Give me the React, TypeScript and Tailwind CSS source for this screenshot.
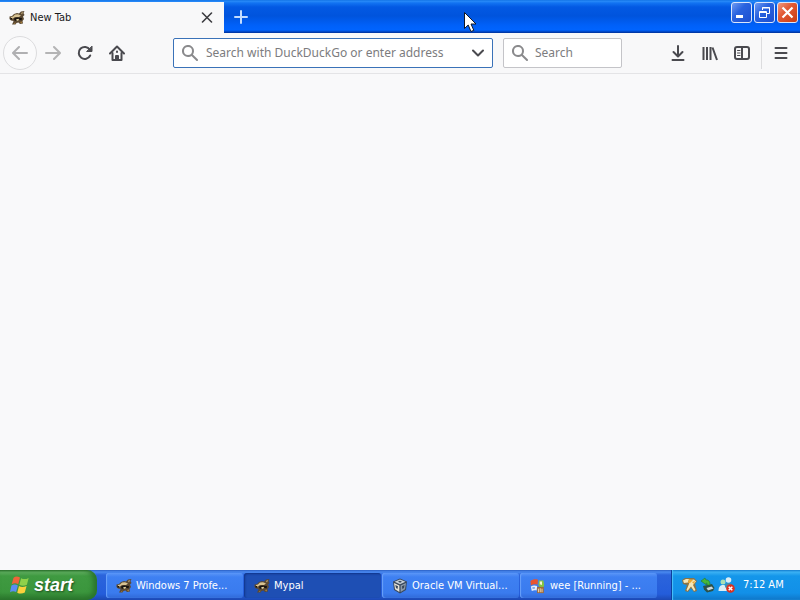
import type { ReactNode } from 'react';
import { clsx } from 'clsx';

type IconProps = { className?: string };

function PolecatIcon({ className = 'w-4 h-4' }: IconProps) {
  return (
    <svg viewBox="0 0 16 16" className={className} aria-hidden="true">
      <path d="M0.500 6.500 3 6 5 4 8 3 10 3.500 12 1.500 15.500 1 14.500 3 15.500 5 14 6.500 15 9 13.500 11 14 13.500 11 14 9.500 12.500 7.500 13 6.500 14.500 3 14.500 4 12.500 4.500 11 2 10.500 0.500 9z" fill="#5c4a33" />
      <path d="M2 7 4 6.500 6 4.500 9 4.200 12 5.500 10 7 6 7 4 8.500 2 8.500z" fill="#d8c393" />
      <path d="M12 3 14 2 13 4.500z" fill="#c9b17c" />
      <path d="M5 8.500 8 7.500 13 8 12.500 10.500 10 9.500 8 11 5.500 10.500z" fill="#16120e" />
      <path d="M7 9.500 9.500 8.700 10 10 8 11z" fill="#ead9a8" />
      <path d="M1.500 8H3V9.500H1.500z" fill="#16120e" />
      <path d="M11 12 13 11.500 12.500 13.500zM5 13.500 6.500 12.500 6 14z" fill="#b98a3d" />
    </svg>
  );
}

function WindowsFlag({ className = 'w-4 h-4' }: IconProps) {
  return (
    <svg viewBox="0 0 18 18" className={className} aria-hidden="true">
      <path d="M3.200 2.400C5.200 1 7 1.200 9 2.300L7.400 8.300C5.400 7.100 3.600 7.200 1.500 8.400z" fill="#f0643a" />
      <path d="M10 2.900C12.200 4 14.200 3.900 16.800 2.600L15.200 8.700C12.700 10 10.600 9.900 8.400 8.800z" fill="#8fd14a" />
      <path d="M1.300 9.500C3.300 8.300 5.200 8.400 7.100 9.500L5.500 15.400C3.600 14.300 1.900 14.300 0 15.500z" fill="#5b8df2" />
      <path d="M8.100 10C10.200 11.100 12.300 11.100 14.900 9.800L13.300 15.800C10.900 17.100 8.700 17 6.500 15.900z" fill="#fbd13c" />
    </svg>
  );
}

function VirtualBoxIcon({ className = 'w-4 h-4' }: IconProps) {
  return (
    <svg viewBox="0 0 16 16" className={className} aria-hidden="true">
      <path d="M8 0.500 15 3.500 14 12 8 15.500 2 12 1 3.500z" fill="#39485c" />
      <path d="M8 1.500 13.500 3.800 8 6.300 2.500 3.800z" fill="#c7d0d8" />
      <path d="M2 5 7.400 7.400V14L3 11.300z" fill="#e7e3d8" />
      <path d="M14 5 8.600 7.400V14L13 11.300z" fill="#8b99a8" />
      <path d="M3.300 7 6 8.300 5.500 11 4 10zM10 8.300 12.500 7 12 10 10.300 11zM6 3.500 8 2.700 10 3.700 8 4.700z" fill="#374659" />
    </svg>
  );
}

function RunningVmIcon({ className = 'w-4 h-4' }: IconProps) {
  return (
    <svg viewBox="0 0 18 16" className={className} aria-hidden="true">
      <path d="M0.500 2.500C3 0.500 6 0 9 1L8.500 6.500C5.500 5.500 3 6 1 7.500z" fill="#e8552e" />
      <path d="M10 1.500C12 2 13 2 15 1.500L16 7 14 12 9.500 7.500z" fill="#86c440" />
      <path d="M1 8.500C3.500 7 5.500 7 8 8L7.500 13C5.500 12.500 4 12.500 2 13.500z" fill="#e9eef5" />
      <path d="M2.500 9.500 5.500 9 5.500 11 3 11.500z" fill="#7ba3e6" />
      <path d="M11 3 13.500 3 13.500 7 11 6z" fill="#f3f3d8" />
      <path d="M8 9H15.500V16H8z" fill="#a06a35" />
      <path d="M9.500 11V15M11.500 10.500V15M13.500 11V15" stroke="#f6e3c0" />
    </svg>
  );
}

function SearchGlyph() {
  return (
    <svg viewBox="0 0 16 16" className="w-4 h-4 shrink-0 fill-[#8a8a8c]" aria-hidden="true">
      <path d="M15.707 14.293l-4.822-4.822a6.019 6.019 0 1 0-1.414 1.414l4.822 4.822a1 1 0 0 0 1.414-1.414zM6 10a4 4 0 1 1 4-4 4 4 0 0 1-4 4z" />
    </svg>
  );
}

function ToolbarButton({ label, children, dim }: { label: string; children: ReactNode; dim?: boolean }) {
  return (
    <button
      type="button"
      aria-label={label}
      className={clsx('flex items-center justify-center w-8 h-8 shrink-0', dim ? 'text-[#b4b4b5]' : 'text-[#4a4a4f]')}
    >
      <svg viewBox="0 0 16 16" className="w-4 h-4" fill="none" stroke="currentColor" strokeWidth="2" strokeLinecap="round" strokeLinejoin="round">
        {children}
      </svg>
    </button>
  );
}

function TitleBar() {
  const caption =
    'flex items-center justify-center w-[21px] h-[21px] rounded-[3px] border border-[#dbe6fb]';
  return (
    <header className="flex h-[33px] bg-[linear-gradient(to_bottom,#0a6be0_0,#2a8cf8_1px,#1273f2_3px,#0359e3_7px,#0054dd_16px,#0060f8_25px,#0064ff_30px,#0040b8_32px,#003099_33px)]">
      <div className="flex w-56 mt-[2px] pl-[9px] pr-2 items-center bg-[#f8f8f9]">
        <PolecatIcon />
        <span className="ml-[5px] pt-px flex-1 text-[11px] text-[#18181a]">New Tab</span>
        <button type="button" aria-label="Close tab" className="flex items-center justify-center w-[18px] h-5">
          <svg viewBox="0 0 12 12" className="w-3 h-3" stroke="#3c3c40" strokeWidth="1.6" strokeLinecap="round">
            <path d="M1.500 1 10.500 10M10.500 1 1.500 10" />
          </svg>
        </button>
      </div>
      <button type="button" aria-label="New tab" className="flex items-center justify-center w-[34px]">
        <svg viewBox="0 0 14 14" className="w-3.5 h-3.5" stroke="#c3dcff" strokeWidth="2" strokeLinecap="round">
          <path d="M7 1V13M1 7H13" />
        </svg>
      </button>
      <div className="flex gap-[2px] ml-auto pt-[2px] pr-[2px]">
        <button type="button" aria-label="Minimize" className={clsx(caption, 'bg-[linear-gradient(135deg,#6f9bf3,#2a63df_40%,#1c4fd0)]')}>
          <svg viewBox="0 0 19 19" className="w-[19px] h-[19px]">
            <path d="M4 12H11V15H4z" fill="#fff" />
          </svg>
        </button>
        <button type="button" aria-label="Restore" className={clsx(caption, 'bg-[linear-gradient(135deg,#6f9bf3,#2a63df_40%,#1c4fd0)]')}>
          <svg viewBox="0 0 19 19" className="w-[19px] h-[19px]" fill="none" stroke="#fff">
            <path d="M7.500 7V4.500H14.500V10.500H12M7 5H15" />
            <path d="M4.500 8.500H11.500V14.500H4.500zM4 9.500H12" />
          </svg>
        </button>
        <button type="button" aria-label="Close" className={clsx(caption, 'bg-[linear-gradient(135deg,#f09a80,#e25a35_40%,#c93c14)]')}>
          <svg viewBox="0 0 19 19" className="w-[19px] h-[19px]" stroke="#fff" strokeWidth="2.2">
            <path d="M4.500 4.500 14.500 14.500M14.500 4.500 4.500 14.500" />
          </svg>
        </button>
      </div>
    </header>
  );
}

function NavBar() {
  return (
    <nav className="flex items-center h-[41px] px-[3px] bg-[#f8f8f9] border-b border-[#e4e4e6]">
      <button
        type="button"
        aria-label="Back"
        className="flex items-center justify-center w-[34px] h-[34px] shrink-0 rounded-full border border-[#dcdcde] bg-[#fafafb]"
      >
        <svg viewBox="0 0 16 16" className="w-4 h-4" fill="none" stroke="#b0b0b2" strokeWidth="2" strokeLinecap="round" strokeLinejoin="round">
          <path d="M15 8H1.500M7 2 1 8 7 14" />
        </svg>
      </button>
      <ToolbarButton label="Forward" dim>
        <path d="M1 8H14.500M9 2 15 8 9 14" />
      </ToolbarButton>
      <ToolbarButton label="Reload">
        <path d="M13.200 10.500A6 6 0 1 1 12.800 4.600" />
        <path d="M15 1.500V6.500H10z" fill="currentColor" strokeWidth="1" />
      </ToolbarButton>
      <ToolbarButton label="Home">
        <path d="M1 8.500 8 1.500 15 8.500" />
        <path d="M3.500 8V15H12.500V8" />
        <path d="M7 15V11H9V15" />
        <path d="M8 6.500V7" />
      </ToolbarButton>

      <label className="flex flex-1 items-center min-w-0 h-[30px] ml-10 px-2 bg-white border border-[#3a72b8] rounded-[2px]">
        <SearchGlyph />
        <input
          type="text"
          aria-label="Address"
          placeholder="Search with DuckDuckGo or enter address"
          className="flex-1 min-w-0 ml-2 font-['Noto_Sans',sans-serif] text-[12px] outline-none placeholder:text-[#7c7c7e]"
        />
        <svg viewBox="0 0 12 12" className="w-3 h-3 shrink-0" fill="none" stroke="#4a4a4f" strokeWidth="2" strokeLinecap="round" strokeLinejoin="round">
          <path d="M1 3.500 6 8.500 11 3.500" />
        </svg>
      </label>
      <label className="flex items-center w-[119px] h-[30px] ml-[10px] mr-10 px-2 bg-white border border-[#c4c4c8] rounded-[2px]">
        <SearchGlyph />
        <input
          type="text"
          aria-label="Search"
          placeholder="Search"
          className="flex-1 min-w-0 ml-[7px] font-['Noto_Sans',sans-serif] text-[12px] outline-none placeholder:text-[#7c7c7e]"
        />
      </label>

      <ToolbarButton label="Downloads">
        <path d="M8 1V11M3.500 7 8 11.500 12.500 7M2.500 15H13.500" />
      </ToolbarButton>
      <ToolbarButton label="Library">
        <path d="M1.500 2V15M5 2V15M8.500 2V15M10.500 2.500 15 15" strokeLinecap="butt" />
      </ToolbarButton>
      <ToolbarButton label="Sidebars">
        <rect x="1" y="2" width="14" height="12" rx="2" />
        <path d="M8 2V14" />
        <path d="M3.500 5.500H6M3.500 8H6M3.500 10.500H6" strokeWidth="1" />
      </ToolbarButton>
      <div className="w-px h-8 ml-[3px] mr-[3px] bg-[#dcdcde]" />
      <ToolbarButton label="Menu">
        <path d="M2.500 3H13.500M2.500 8H13.500M2.500 13H13.500" />
      </ToolbarButton>
    </nav>
  );
}

const tasks = [
  { title: 'Windows 7 Profe...', icon: PolecatIcon, active: false },
  { title: 'Mypal', icon: PolecatIcon, active: true },
  { title: 'Oracle VM Virtual...', icon: VirtualBoxIcon, active: false },
  { title: 'wee [Running] - ...', icon: RunningVmIcon, active: false },
];

function Taskbar() {
  return (
    <footer className="flex h-[30px] bg-[linear-gradient(to_bottom,#2a5fc4_0,#4a8af0_2px,#2b64dc_5px,#245ddb_24px,#1c48b4_30px)]">
      <button
        type="button"
        className="flex items-center w-[97px] h-[30px] shrink-0 pl-[10px] rounded-r-[10px] text-white bg-[linear-gradient(to_bottom,#2b6c2b_0,#62b162_2px,#3f9a41_6px,#3b963d_22px,#2a752c_30px)] shadow-[inset_-4px_0_5px_#2a742c]"
      >
        <WindowsFlag className="w-5 h-5" />
        <span className="ml-1 font-['Liberation_Sans',Arial,sans-serif] text-[18px] leading-5 font-bold italic [text-shadow:1px_1px_2px_#1d4d1e]">
          start
        </span>
      </button>
      <div className="flex flex-1 min-w-0 gap-px pl-[9px] pr-[14px] pt-[3px] pb-[2px]">
        {tasks.map(({ title, icon: Icon, active }) => (
          <button
            key={title}
            type="button"
            className={clsx(
              'flex items-center flex-1 min-w-0 pl-[10px] rounded-[3px] text-[11px] text-white whitespace-nowrap',
              active
                ? 'bg-[#1e4fb4] shadow-[inset_1px_1px_2px_#10348a]'
                : 'bg-[linear-gradient(to_bottom,#5a96f8_0,#3e80f2_4px,#3a7bee_20px,#3069d8_25px)] shadow-[inset_1px_0_1px_#6ba2fa]',
            )}
          >
            <Icon className="w-4 h-4 shrink-0" />
            <span className="ml-1 pt-px">{title}</span>
          </button>
        ))}
      </div>
      <div className="flex items-center w-[129px] shrink-0 pl-[10px] border-l border-[#0e3f9c] bg-[linear-gradient(to_bottom,#0d72c8_0,#3cb2f4_2px,#1496ea_6px,#1290e8_23px,#0f76c8_30px)] shadow-[inset_1px_0_1px_#4cc4fa]">
        <svg viewBox="0 0 16 16" className="w-4 h-4" aria-label="Guest additions">
          <path d="M0 3 3 1H12L15 4 13 7 15 14 12 15 9 11 6 15 3 14 5 8 1 7z" fill="#8a7346" />
          <path d="M1 3.500 4 2H7L6 5.500 2 6zM8 3 12 2.500 14 4.500 11 8 13.500 13 12 14 9 9.500 5.500 14 4.500 13 7 7z" fill="#f5e7b8" />
          <path d="M7 2 11 3 8 6 6 6zM10 5 13 4 12 7z" fill="#eda72f" />
        </svg>
        <svg viewBox="0 0 16 16" className="w-4 h-4 ml-[2px]" aria-label="Safely remove hardware">
          <path d="M3 9 12 7 14.500 11 13 14 7 15.500 4 12.500z" fill="#2c5148" />
          <path d="M1 4 5 1 6 3C9 2.500 10 5 10 8H7C7 6.500 7 6 6 6L6.500 8z" fill="#45b83a" stroke="#27762c" strokeWidth="0.600" />
          <path d="M6.500 11 11.500 9.500 13.500 11.500 8 13.500z" fill="#cdd8dc" />
        </svg>
        <svg viewBox="0 0 18 16" className="w-[18px] h-4 ml-[2px]" aria-label="Network">
          <circle cx="5" cy="5" r="2.500" fill="#a9dfb4" />
          <path d="M0.500 14C0.500 9 3 8 5 8S9 9 9 14z" fill="#dceef5" />
          <circle cx="10.500" cy="3" r="2.800" fill="#dceef5" />
          <path d="M7 10.500C7 6.500 9 6 10.500 6S14.500 6.500 14.500 10.500z" fill="#3f90ad" />
          <circle cx="12.500" cy="11.500" r="4.300" fill="#dd2f1d" />
          <path d="M10.700 9.700 14.300 13.300M14.300 9.700 10.700 13.300" stroke="#fff" strokeWidth="1.500" />
        </svg>
        <time className="ml-[7px] pt-px text-[11px] text-white">7:12 AM</time>
      </div>
    </footer>
  );
}

export default function App() {
  return (
    <div className="relative flex flex-col min-h-screen bg-[#f9f9fa] font-['DejaVu_Sans_Condensed','DejaVu_Sans',Tahoma,sans-serif]">
      <TitleBar />
      <NavBar />
      <main className="flex-1" />
      <Taskbar />
      {/* mouse pointer */}
      <svg viewBox="0 0 13 21" className="absolute left-[58%] top-3 w-[13px] h-[21px] pointer-events-none" aria-hidden="true">
        <path d="M0.500 0.500V16.500L4.200 13 7 19.500 9.800 18.300 7 12H12z" fill="#fff" stroke="#101828" />
      </svg>
    </div>
  );
}
